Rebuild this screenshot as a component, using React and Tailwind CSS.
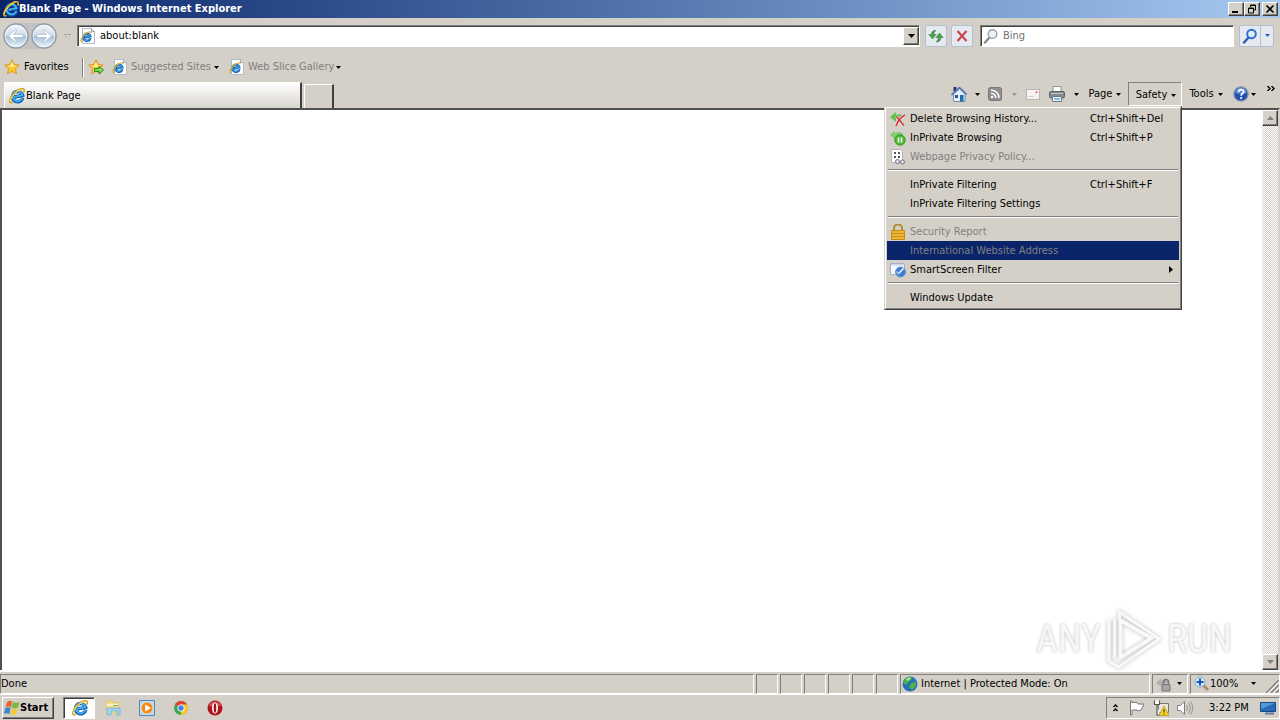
import React from "react";

function IELogo({ className = "size-4" }) {
  return (
    <svg viewBox="0 0 16 16" className={className} aria-hidden="true">
      <g transform="rotate(-12 8 8)">
        <path d="M13.300 10.800A5.200 5.200 0 1 1 13.700 8.500H5.500" fill="none" stroke="#0f58ae" strokeWidth="3.400" />
        <path d="M12.900 10.800A5 5 0 1 1 13.500 8.300H5.500" fill="none" stroke="#45b2f2" strokeWidth="1.800" />
      </g>
      <path d="M3.600 14.500C-.6 16.500.2 10.500 4.500 5.800 8.800 1.100 14.600-.8 15.200 2c.2.800 0 1.600-.5 2.500" fill="none" stroke="#dba91f" strokeWidth="1.700" />
      <path d="M1.300 13C1.800 9.800 6.500 3.800 11.600 1.600" fill="none" stroke="#ffe873" strokeWidth="1" />
    </svg>
  );
}

function PageIcon() {
  return (
    <svg viewBox="0 0 16 16" className="size-4 shrink-0" aria-hidden="true">
      <path d="M2.500.5h9l3 3v12h-12z" fill="#fff" stroke="#b2bac6" />
      <path d="M11.500.5v3h3" fill="#d7e4f5" stroke="#9aa5b5" />
      <g transform="rotate(-12 7 9)">
        <path d="M10 10.800A3.500 3.500 0 1 1 10.300 8.900H4.500" fill="none" stroke="#1763b4" strokeWidth="2.500" />
        <path d="M9.800 10.600A3.400 3.400 0 1 1 10.100 8.900H5" fill="none" stroke="#41a3e2" />
      </g>
      <path d="M2.500 13.500C-.8 14 1.500 9.200 4.500 6.500s6.800-3.500 6.800-1.500" fill="none" stroke="#d9ac27" strokeWidth="1.200" />
    </svg>
  );
}

const starPath = "M8 .8l2.200 4.700 5.100.6-3.800 3.500 1 5.200L8 12.200l-4.500 2.600 1-5.200L.7 6.100l5.100-.6z";

function Star({ arrow }) {
  return (
    <svg viewBox="0 0 16 16" className="size-4 shrink-0" aria-hidden="true">
      <path d={starPath} fill="#fcc62c" stroke="#dc9a2b" />
      <path d="M8 2.800l1.300 3.500 3.300.4-5 1.300-4-1.200 3-.6z" fill="#fff3a4" />
      {arrow && <path d="M6.500 9.500h4.500V7.200L15.500 11 11 15v-2.500H6.500z" fill="#7fdc5c" stroke="#258a1e" />}
    </svg>
  );
}

function Caret({ color = "#000" }) {
  return (
    <svg viewBox="0 0 5 3" className="h-[3px] w-[5px] shrink-0" aria-hidden="true">
      <path d="M0 0h5L2.500 3z" fill={color} />
    </svg>
  );
}

function Lens({ blue }) {
  return (
    <svg viewBox="0 0 16 16" className="size-4 shrink-0" aria-hidden="true">
      <path d="M6.300 9.700L2 14.500" stroke={blue ? "#2760b8" : "#8a8a8a"} strokeWidth="2.400" strokeLinecap="round" />
      <circle cx="9.500" cy="6" r="4.300" fill={blue ? "#dcecff" : "#e8f2fa"} stroke={blue ? "#2f6fce" : "#9aa4ae"} strokeWidth={blue ? 2 : 1.500} />
    </svg>
  );
}

function NavArrow({ forward, label }) {
  return (
    <button aria-label={label} className="size-[26px]">
      <svg viewBox="0 0 26 26" className="size-[26px]">
        <defs>
          <linearGradient id={forward ? "navf" : "navb"} x1="0" y1="0" x2="0" y2="1">
            <stop offset="0" stopColor="#f4f8fb" />
            <stop offset=".48" stopColor="#cfdbe7" />
            <stop offset=".52" stopColor="#a8bfd6" />
            <stop offset="1" stopColor="#eefaff" />
          </linearGradient>
        </defs>
        <circle cx="13" cy="13" r="12" fill={forward ? "url(#navf)" : "url(#navb)"} stroke="#8c9aa9" strokeWidth="1.300" />
        <circle cx="13" cy="13" r="10.800" fill="none" stroke="#fff" opacity=".7" />
        <path
          d={forward ? "M20.500 13l-6.500-6h-2l3.500 4.500H6v3h9.500L12 19h2z" : "M5.500 13L12 7h2l-3.500 4.500H20v3h-9.500L14 19h-2z"}
          fill="#fff"
          stroke="#9db2c9"
          strokeWidth=".6"
        />
      </svg>
    </button>
  );
}

function HomeIcon() {
  return (
    <svg viewBox="0 0 16 16" className="size-4" aria-hidden="true">
      <path d="M2.500 1h3v4.500h-3z" fill="#27306e" />
      <path d="M2.500 8v7.500h11.500V8L8.500 3z" fill="#e3eefb" stroke="#7690b8" />
      <path d="M.5 9L8.500 1.500l7 7" fill="none" stroke="#5476b0" strokeWidth="1.600" />
      <path d="M9 9h3.500v6.500H9z" fill="#1c6fa8" />
      <path d="M4 9h3v3H4z" fill="#2b5594" />
    </svg>
  );
}

function FeedIcon() {
  return (
    <svg viewBox="0 0 14 14" className="size-3.5" aria-hidden="true">
      <rect x=".5" y=".5" width="13" height="13" rx="2" fill="#8f8f8f" stroke="#777" />
      <path d="M3 6.200A4.800 4.800 0 0 1 7.800 11M3 3a8 8 0 0 1 8 8" fill="none" stroke="#fff" strokeWidth="1.500" />
      <circle cx="4" cy="10" r="1.200" fill="#fff" />
    </svg>
  );
}

function MailIcon() {
  return (
    <svg viewBox="0 0 14 11" className="h-[11px] w-3.5" aria-hidden="true">
      <rect x=".5" y=".5" width="13" height="10" fill="#f5f2f1" stroke="#bbb6b2" />
      <path d="M2 7.500h6" stroke="#d5d0cd" />
      <path d="M9.500 2.500h2v1.500h-2z" fill="#d45a5a" />
    </svg>
  );
}

function PrinterIcon() {
  return (
    <svg viewBox="0 0 16 16" className="size-4" aria-hidden="true">
      <path d="M4 .5h8V6H4z" fill="#fff" stroke="#90959b" />
      <rect x=".5" y="5.500" width="15" height="6.500" rx="1.500" fill="#858b91" stroke="#5d6267" />
      <path d="M2 7.500h12" stroke="#bfc6cb" />
      <path d="M3.500 10.500h9v5h-9z" fill="#e7f4fc" stroke="#717b85" />
      <path d="M5 13h6" stroke="#3786b7" />
    </svg>
  );
}

function HelpIcon() {
  return (
    <svg viewBox="0 0 16 16" className="size-4" aria-hidden="true">
      <circle cx="8" cy="8" r="7.200" fill="#2850b0" stroke="#8d98ae" strokeWidth="1.300" />
      <path d="M2.500 7a5.500 5.500 0 0 1 11 0q-5 2-11 0" fill="#6290dc" />
      <path d="M5.600 6c0-3.200 5-3.100 5-.3 0 1.800-2.500 2-2.500 4" fill="none" stroke="#fff" strokeWidth="1.700" />
      <circle cx="8.100" cy="12" r="1.100" fill="#fff" />
    </svg>
  );
}

function MenuIcon({ kind }) {
  const pictures = {
    delete: (
      <>
        <path d="M0 6l6-5v3c2-1 4-1 6 0L9 8 6 7.500V11z" fill="#62c04e" />
        <path d="M6.500 5.500l7.500 9M15 4c-4 2-7 5.500-9 11" fill="none" stroke="#efe8e5" strokeWidth="3" />
        <path d="M6.500 5.500l7.500 9M15 4c-4 2-7 5.500-9 11" fill="none" stroke="#cc3a3a" strokeWidth="1.700" />
      </>
    ),
    browse: (
      <>
        <path d="M0 5l5-4.500v3c3-2 6-2 8 1v3L5 6.500V9z" fill="#7fcb74" />
        <circle cx="10" cy="10" r="5.200" fill="#4dbb33" stroke="#3a9a2c" />
        <path d="M8.500 7.500v5M11.500 7.500v5" stroke="#fff" strokeWidth="1.500" />
      </>
    ),
    policy: (
      <>
        <path d="M1.500.5h9l2 2v11h-11z" fill="#fff" stroke="#b4b4bc" />
        <path d="M4 4h2M8 4h2M4 8h2M8 8h2" stroke="#55555f" strokeWidth="2" />
        <circle cx="7.500" cy="12.500" r="2" fill="#e5e5ef" stroke="#70707c" />
        <circle cx="12.500" cy="13" r="2" fill="#e5e5ef" stroke="#70707c" />
      </>
    ),
    lock: (
      <>
        <path d="M4 7V4a4 3.500 0 0 1 8 0v3" fill="none" stroke="#b08d38" strokeWidth="2" />
        <path d="M1.500 6.500h13v9h-13z" fill="#edb532" stroke="#c38c1c" />
        <path d="M2 9.500h12M2 12.500h12" stroke="#c78f20" />
      </>
    ),
    filter: (
      <>
        <path d="M.5 1.500h14v11H.5z" fill="#f8faff" stroke="#a3b0c6" />
        <path d="M1 2h13v1.500H1z" fill="#c8d5ea" />
        <circle cx="10.500" cy="10" r="5" fill="#3f7ad6" stroke="#7092c5" />
        <path d="M8 13l1-3 4-4 1 1-4 4z" fill="#fff" />
        <path d="M6.500 9.500l2 2" stroke="#b8d5fb" strokeWidth="1.500" />
      </>
    ),
  };
  return (
    <svg viewBox="0 0 16 16" className="size-4 shrink-0" aria-hidden="true">
      {pictures[kind]}
    </svg>
  );
}

function MenuItem({ icon, text, keys, disabled, selected, submenu }) {
  const tone = selected
    ? "bg-[#0a246a] text-[#808080]"
    : disabled
      ? "text-[#808080]"
      : "text-black";
  return (
    <button role="menuitem" aria-disabled={disabled} className={`flex h-[19px] w-full items-center pl-[3px] text-left ${tone}`}>
      <span className="flex w-5 shrink-0">{icon && <MenuIcon kind={icon} />}</span>
      <span className="w-[180px] whitespace-nowrap">{text}</span>
      <span className="flex-1 whitespace-nowrap">{keys}</span>
      {submenu && (
        <svg viewBox="0 0 4 7" className="mr-1.5 h-[7px] w-1">
          <path d="M0 0l4 3.500L0 7z" />
        </svg>
      )}
    </button>
  );
}

function Separator() {
  return <div role="separator" className="mx-px my-[3px] flex h-[3px] flex-col"><span className="h-px bg-[#808080]" /><span className="h-px bg-white" /></div>;
}

function SafetyMenu() {
  return (
    <div role="menu" className="absolute right-0 top-full z-10 w-[298px] border border-b-[#404040] border-l-[#d4d0c8] border-r-[#404040] border-t-[#d4d0c8] bg-[#d4d0c8]">
      <div className="border border-b-[#808080] border-l-white border-r-[#808080] border-t-white px-px py-px">
        <MenuItem icon="delete" text="Delete Browsing History..." keys="Ctrl+Shift+Del" />
        <MenuItem icon="browse" text="InPrivate Browsing" keys="Ctrl+Shift+P" />
        <MenuItem icon="policy" text="Webpage Privacy Policy..." disabled />
        <Separator />
        <MenuItem text="InPrivate Filtering" keys="Ctrl+Shift+F" />
        <MenuItem text="InPrivate Filtering Settings" />
        <Separator />
        <MenuItem icon="lock" text="Security Report" disabled />
        <MenuItem text="International Website Address" disabled selected />
        <MenuItem icon="filter" text="SmartScreen Filter" submenu />
        <Separator />
        <MenuItem text="Windows Update" />
      </div>
    </div>
  );
}

const raised = "border border-b-[#404040] border-l-white border-r-[#404040] border-t-white bg-[#d4d0c8]";

function WindowButton({ label, children }) {
  return (
    <button aria-label={label} className={`flex h-3.5 w-4 items-center justify-center shadow-[inset_-1px_-1px_#808080] ${raised}`}>
      <svg viewBox="0 0 10 10" className="size-2.5" fill="none" stroke="#000">{children}</svg>
    </button>
  );
}

function TitleBar() {
  return (
    <header className="flex h-[18px] items-center bg-linear-to-r from-[#0a246a] to-[#a6caf0] pl-[3px] pr-0.5 text-white">
      <IELogo />
      <h1 className="flex-1 truncate font-bold">Blank Page - Windows Internet Explorer</h1>
      <WindowButton label="Minimize"><path d="M1 8h6" strokeWidth="2" /></WindowButton>
      <WindowButton label="Restore">
        <path d="M3.500 3V1h5v5H7M3 1.500h6M1.500 4h5v5h-5zM1 4.500h6" />
      </WindowButton>
      <span className="w-0.5" />
      <WindowButton label="Close"><path d="M1.500 1.500l7 7M8.500 1.500l-7 7" strokeWidth="1.600" /></WindowButton>
    </header>
  );
}

const sunken = "border border-b-white border-l-[#808080] border-r-white border-t-[#808080] shadow-[inset_1px_1px_#404040]";
const softButton = "flex h-[22px] w-[22px] items-center justify-center rounded-[2px] border border-[#b5bfd0] bg-[#e5e9f1]";

function AddressRow() {
  return (
    <div className="flex h-[35px] items-center pl-[3px] pr-1.5">
      <div className="flex gap-0.5 rounded-full bg-[#c3c2c3]">
        <NavArrow label="Back" />
        <NavArrow forward label="Forward" />
      </div>
      <button aria-label="Recent pages" className="flex h-5 w-5 items-center justify-center">
        <svg viewBox="0 0 7 4" className="h-1 w-[7px]"><path d="M.5.5h6l-3 3z" fill="#e8e6e2" stroke="#aaa69e" /></svg>
      </button>
      <div className={`flex h-[22px] flex-1 items-center bg-white pl-0.5 ${sunken}`}>
        <PageIcon />
        <input aria-label="Address" defaultValue="about:blank" className="ml-1 min-w-0 flex-1 bg-transparent outline-none" />
        <button aria-label="Show address list" className={`flex h-[18px] w-4 items-center justify-center shadow-[inset_-1px_-1px_#808080] ${raised}`}>
          <svg viewBox="0 0 7 4" className="h-1 w-[7px]"><path d="M0 0h7L3.500 4z" /></svg>
        </button>
      </div>
      <button aria-label="Refresh" className={`ml-[5px] ${softButton}`}>
        <svg viewBox="0 0 16 16" className="size-4" fill="#46a046" stroke="#2f7f35" strokeWidth=".5">
          <path d="M8 2.500Q3.500 2 3.300 6.500H.8L4.500 11l3.700-4.500H5.700Q5.800 4 8 2.500z" />
          <path d="M8 14q4.700.3 4.800-4.500h2.400L11.500 5 7.800 9.500h2.600Q10.300 12.500 8 14z" />
        </svg>
      </button>
      <button aria-label="Stop" className={`ml-1 ${softButton}`}>
        <svg viewBox="0 0 12 12" className="size-3"><path d="M1.500 1l9 10M10.500 1l-9 10" stroke="#c8474d" strokeWidth="2.200" /></svg>
      </button>
      <label className={`ml-[7px] flex h-[22px] w-[254px] items-center bg-white pl-0.5 ${sunken}`}>
        <Lens />
        <input aria-label="Search" placeholder="Bing" className="ml-1 min-w-0 flex-1 bg-transparent outline-none placeholder:text-[#707070]" />
      </label>
      <div className="ml-[5px] flex h-[22px] rounded-[2px] border border-[#b5bfd0] bg-[#e5e9f1]">
        <button aria-label="Start search" className="flex w-5 items-center justify-center"><Lens blue /></button>
        <button aria-label="Search options" className="flex w-[13px] items-center justify-center border-l border-[#b5bfd0]"><Caret color="#2760b8" /></button>
      </div>
    </div>
  );
}

function FavoritesRow() {
  return (
    <nav aria-label="Favorites bar" className="flex h-[28px] items-center pl-1">
      <button className="flex w-[78px] items-center gap-1"><Star />Favorites</button>
      <span className="h-[19px] w-1.5 border-l border-[#808080] shadow-[inset_1px_0_#fff]" />
      <button aria-label="Add to Favorites bar"><Star arrow /></button>
      <button className="ml-2 flex items-center gap-[3px] text-[#808080]"><PageIcon /><span className="w-20 whitespace-nowrap text-left">Suggested Sites</span><Caret /></button>
      <button className="ml-[10px] flex items-center gap-[3px] text-[#808080]"><PageIcon /><span className="w-[85px] whitespace-nowrap text-left">Web Slice Gallery</span><Caret /></button>
    </nav>
  );
}

const tool = "flex h-6 items-center justify-center";

function TabRow() {
  return (
    <div className="flex h-[27px] pl-1">
      <div role="tablist" className="mt-px flex flex-1 gap-0.5">
        <button role="tab" aria-selected="true" className="flex w-[298px] items-center border-l border-r-2 border-t border-l-white border-r-[#404040] border-t-white bg-linear-to-b from-white to-[#d8d5cf] pl-1 text-left">
          <IELogo /><span className="ml-px">Blank Page</span>
        </button>
        <button aria-label="New tab" className="mt-0.5 w-[30px] border-l border-r-2 border-t border-l-white border-r-[#404040] border-t-white" />
      </div>
      <div className="flex items-start pt-px">
        <button aria-label="Home" className={`${tool} w-[22px]`}><HomeIcon /></button>
        <button aria-label="Home options" className={`${tool} w-3.5`}><Caret /></button>
        <button aria-label="Feeds" className={`${tool} w-[22px]`}><FeedIcon /></button>
        <button aria-label="Feed options" className={`${tool} w-4`}><Caret color="#99958e" /></button>
        <button aria-label="Read mail" className={`${tool} w-[22px]`}><MailIcon /></button>
        <button aria-label="Print" className={`${tool} w-[26px]`}><PrinterIcon /></button>
        <button aria-label="Print options" className={`${tool} w-3`}><Caret /></button>
        <button className={`${tool} w-[46px] gap-1`}>Page<Caret /></button>
        <div className="relative">
          <button aria-haspopup="menu" aria-expanded="true" className="flex h-6 w-[54px] items-center justify-center gap-1 border border-b-white border-l-[#808080] border-r-white border-t-[#808080] pl-0.5 pt-0.5">
            Safety<Caret />
          </button>
          <SafetyMenu />
        </div>
        <button className={`${tool} w-12 gap-1`}>Tools<Caret /></button>
        <button aria-label="Help" className={`${tool} w-7 gap-0.5`}><HelpIcon /><Caret /></button>
        <button aria-label="More commands" className="flex h-3 w-[22px] items-center justify-center pl-1">
          <svg viewBox="0 0 8 5" className="h-[5px] w-2"><path d="M.5 0L3 2.500.5 5M4.500 0L7 2.500 4.500 5" fill="none" stroke="#000" strokeWidth="1.400" /></svg>
        </button>
      </div>
    </div>
  );
}

function ScrollButton({ up }) {
  return (
    <button aria-label={up ? "Scroll up" : "Scroll down"} className={`flex size-4 items-center justify-center shadow-[inset_-1px_-1px_#808080] ${raised}`}>
      <svg viewBox="0 0 7 4" className="h-1 w-[7px]"><path d={up ? "M0 4h7L3.500 0z" : "M0 0h7L3.500 4z"} fill="#808080" /></svg>
    </button>
  );
}

function Watermark() {
  return (
    <div className="absolute bottom-0 right-[46px] flex items-center gap-1 font-['Liberation_Sans_Narrow','Roboto_Condensed','Liberation_Sans',sans-serif] text-[38px] leading-[60px] text-[#f7f7f7] [text-shadow:0_0_3px_#bbb]">
      <span>ANY</span>
      <svg viewBox="0 0 60 62" className="h-[62px] w-[58px] drop-shadow-[0_0_2px_#bbb]" fill="none" stroke="#f9f9f9" strokeWidth="4" aria-hidden="true">
        <path d="M16 12v38l32-20zM16 12L48 30" />
        <path d="M10 50V10M4 12v42l10 6 42-29L15 3v8" strokeWidth="3" />
      </svg>
      <span>RUN</span>
    </div>
  );
}

function Viewport() {
  return (
    <main className="relative flex flex-1 border-l-2 border-r-2 border-t-2 border-l-[#505050] border-r-[#d4d0c8] border-t-[#505050] bg-white">
      <div className="flex-1" />
      <div className="flex w-4 flex-col justify-between bg-[repeating-conic-gradient(#d4d0c8_0_25%,#fff_0_50%)] bg-size-[2px_2px]">
        <ScrollButton up />
        <ScrollButton />
      </div>
      <Watermark />
    </main>
  );
}

const pane = "flex h-5 items-center border border-b-white border-l-[#808080] border-r-white border-t-[#808080]";

function StatusBar() {
  return (
    <footer className="flex h-6 items-center gap-0.5 border-t-2 border-white pt-px">
      <div role="status" className={`flex-1 ${pane}`}>Done</div>
      {[1, 2, 3, 4, 5, 6].map((n) => <span key={n} className={`w-[22px] ${pane}`} />)}
      <div className={`w-[250px] gap-[3px] pl-px ${pane}`}>
        <svg viewBox="0 0 16 16" className="size-4" aria-hidden="true">
          <circle cx="8" cy="8" r="7.500" fill="#2571b8" />
          <path d="M3 3q4-4 7-1L8 5l-2 1-1 3-4-2zM9 7l5-1v4l-4 4-3-3z" fill="#4eb24c" />
          <path d="M4 3q3-2 5-1L6 5z" fill="#b9e4a0" />
        </svg>
        Internet | Protected Mode: On
      </div>
      <button aria-label="InPrivate filtering status" className={`w-9 justify-between pl-[3px] pr-[5px] ${pane}`}>
        <svg viewBox="0 0 16 16" className="size-4">
          <path d="M0 7l5-5v3q5-3 8 2l-8 1v3z" fill="#b0b0b0" />
          <path d="M7.500 9V6a2.500 2.500 0 0 1 5 0v3" fill="none" stroke="#777" strokeWidth="1.500" />
          <path d="M6 8.500h8V15H6z" fill="#a5a5a5" stroke="#777" />
        </svg>
        <Caret />
      </button>
      <div className={`w-[90px] pl-[3px] ${pane}`}>
        <button className="flex flex-1 items-center">
          <svg viewBox="0 0 16 16" className="size-4" aria-hidden="true">
            <path d="M9 9l5 5" stroke="#aa8d65" strokeWidth="3" />
            <circle cx="6" cy="6" r="5" fill="#deefff" stroke="#80a8d5" />
            <path d="M6 2.500v7M2.500 6h7" stroke="#1657b5" strokeWidth="2.200" />
          </svg>
          <span className="flex-1 text-left">100%</span>
          <Caret />
        </button>
        <svg viewBox="0 0 13 13" className="ml-2.5 h-[13px] w-[13px] self-end" aria-hidden="true">
          <path d="M0 13L13 0M5 13l8-8M10 13l3-3" stroke="#808080" strokeWidth="1.500" />
          <path d="M2 13L13 2M7 13l6-6" stroke="#fff" />
        </svg>
      </div>
    </footer>
  );
}

function TaskIcon({ kind }) {
  const pictures = {
    explorer: (
      <>
        <path d="M1 1h6l1 1.500h6V13H1z" fill="#f0dc8d" stroke="#dcc778" />
        <path d="M2 4h11v2H2z" fill="#fff4bf" />
        <path d="M8 5.500h5" stroke="#69b86a" />
        <path d="M2 8h13v7h-3v-4H6v4H2z" fill="#9fd5ee" stroke="#6badd0" strokeWidth=".7" />
      </>
    ),
    player: (
      <>
        <path d="M.5.5h15v15H.5z" fill="#b9d7f0" stroke="#5287bf" />
        <circle cx="8" cy="8" r="6" fill="#f48a16" stroke="#fff" strokeWidth=".6" />
        <path d="M6.200 4.500v7L12 8z" fill="#fff" />
      </>
    ),
    chrome: (
      <>
        <circle cx="8" cy="8" r="7" fill="#3da750" />
        <path d="M8 8L1.900 4.500A7 7 0 0 1 14.100 4.500z" fill="#e04334" />
        <path d="M8 8V4.500h6.100A7 7 0 0 1 8 15z" fill="#fbc72d" />
        <circle cx="8" cy="8" r="3.600" fill="#fff" />
        <circle cx="8" cy="8" r="2.700" fill="#4285e8" />
      </>
    ),
    opera: (
      <>
        <circle cx="8" cy="8" r="7.500" fill="#b0141d" />
        <path d="M2 6a6.300 6.300 0 0 1 12 0" fill="#d5545a" />
        <ellipse cx="8" cy="8" rx="3" ry="5.600" fill="#fff" />
        <ellipse cx="8" cy="8" rx="1.300" ry="4.800" fill="#a30f18" />
      </>
    ),
  };
  return <svg viewBox="0 0 16 16" className="size-4">{pictures[kind]}</svg>;
}

function Taskbar() {
  return (
    <div className="flex h-[26px] items-center border-t border-t-white pl-0.5">
      <button className={`flex h-[22px] w-[52px] items-center pl-px font-bold shadow-[inset_-1px_-1px_#808080] ${raised}`}>
        <svg viewBox="0 0 16 16" className="size-4 shrink-0" aria-hidden="true">
          <path d="M3 2Q5.500 0 8.500 1.500L7 7.300Q4.500 5.800 1.500 7z" fill="#e56931" />
          <path d="M9.200 2q3 1.500 6.300 0L14 7.700q-3.300 1.600-6.300 0z" fill="#77b944" />
          <path d="M1.200 7.900q3-1.400 5.500.2L5.300 14q-2.500-1.500-5.300-.2z" fill="#3c86d0" />
          <path d="M7.400 8.500q3.300 1.600 6.300 0l-1.500 5.700q-3 1.500-6.200 0z" fill="#f6ca3c" />
        </svg>
        Start
      </button>
      <nav aria-label="Taskbar" className="ml-[9px] flex flex-1 items-center">
        <button aria-label="Internet Explorer" className={`mr-px flex h-[22px] w-8 items-center justify-center bg-white pl-px ${sunken}`}><IELogo /></button>
        {[["explorer", "Windows Explorer"], ["player", "Media Player"], ["chrome", "Chrome"], ["opera", "Opera"]].map(([kind, label]) => (
          <button key={kind} aria-label={label} className="flex w-[34px] items-center justify-center"><TaskIcon kind={kind} /></button>
        ))}
      </nav>
      <div className="flex h-[22px] w-[174px] items-center border border-b-white border-l-[#808080] border-r-white border-t-[#808080] pl-1.5 pr-[3px]">
        <button aria-label="Show hidden icons" className="w-2">
          <svg viewBox="0 0 5 8" className="h-2 w-[5px]"><path d="M.5 3l2-2 2 2M.5 7l2-2 2 2" fill="none" stroke="#000" strokeWidth="1.300" /></svg>
        </button>
        <div className="ml-2 flex gap-2">
          <svg viewBox="0 0 16 16" className="size-4" aria-hidden="true">
            <path d="M1.500 1v14h1.500V10h5l1 1 3-1 3-6H9L8 2.500H3V1z" fill="#fff" stroke="#777" />
          </svg>
          <svg viewBox="0 0 16 16" className="size-4" aria-hidden="true">
            <path d="M5.500 3.500h10v9h-10z" fill="#e8e6d8" stroke="#777" />
            <path d="M1.500.5v4h5v-4M4 4.500V15h3" fill="#fff" stroke="#555" strokeWidth="1.200" />
            <path d="M11 6l5 9.500H6z" fill="#f8d32b" stroke="#b18e15" strokeWidth=".7" />
            <path d="M11 9v3.500M11 13.500v1" stroke="#222" />
          </svg>
          <svg viewBox="0 0 16 16" className="size-4" aria-hidden="true">
            <path d="M.5 5.500h3l4-4v13l-4-4h-3z" fill="#fff" stroke="#808080" />
            <path d="M9.500 5q2 3 0 6M11.500 3q3.500 5 0 10M13.500 1.500q4.500 6.500 0 13" fill="none" stroke="#969696" />
          </svg>
        </div>
        <time className="ml-4 flex-1 whitespace-nowrap">3:22 PM</time>
        <button aria-label="Show desktop">
          <svg viewBox="0 0 16 14" className="h-3.5 w-4">
            <path d="M.5 1.500h15v9H.5z" fill="#286ab8" stroke="#174a82" />
            <path d="M1 2h14L1 8z" fill="#5598d9" />
            <path d="M5 12.500h9" stroke="#5d7d9e" strokeWidth="2" />
          </svg>
        </button>
      </div>
    </div>
  );
}

export default function App() {
  return (
    <div className="flex min-h-screen flex-col overflow-hidden bg-[#d4d0c8] font-['DejaVu_Sans_Condensed','DejaVu_Sans',sans-serif] text-[11px] leading-[14px] text-black">
      <TitleBar />
      <AddressRow />
      <FavoritesRow />
      <TabRow />
      <Viewport />
      <StatusBar />
      <Taskbar />
    </div>
  );
}
